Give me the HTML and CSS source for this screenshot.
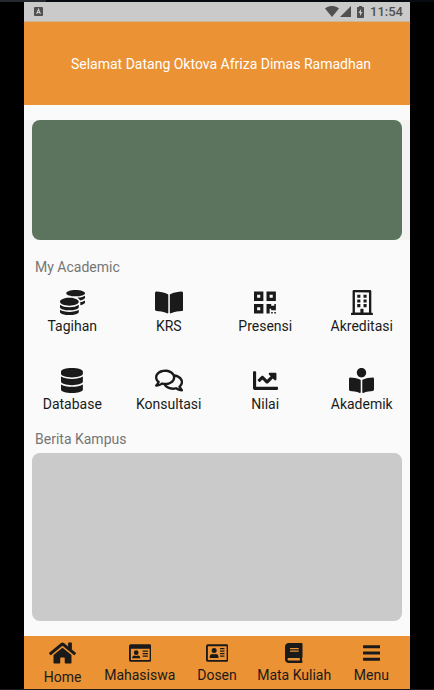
FILE: index.html
```html
<!DOCTYPE html>
<html lang="id">
<head>
<meta charset="utf-8">
<meta name="viewport" content="width=device-width, initial-scale=1">
<title>My Academic</title>
<link rel="stylesheet" href="styles.css">
</head>
<body>
<div class="window-edge"><div class="window-tab"></div></div>
<div class="app">
  <div class="status">
    <svg class="status-app" viewBox="0 0 9 9" aria-hidden="true"><rect width="9" height="9" rx="1" fill="#505050"/><path d="M2.6 7 4.5 2.2 6.4 7M3.2 5.5h2.6" fill="none" stroke="#ccc" stroke-width="1.1"/></svg>
    <div class="status-right">
      <svg class="wifi" viewBox="0 0 14 11" aria-hidden="true"><path d="M0 2.6C4-.9 10-.9 14 2.6L7 11z"/></svg>
      <svg class="signal" viewBox="0 0 11 11" aria-hidden="true"><path d="M11 0v11H0z"/></svg>
      <svg class="battery" viewBox="0 0 7 12" aria-hidden="true"><path fill-rule="evenodd" d="M2 0h3v1h1.2q.8 0 .8.8v9.4q0 .8-.8.8H.8q-.8 0-.8-.8V1.8Q0 1 .8 1H2zM4 3 1.5 7H3v3l2.5-4H4z"/></svg>
      <span class="clock">11:54</span>
    </div>
  </div>
  <header class="header">Selamat Datang Oktova Afriza Dimas Ramadhan</header>
  <main class="content">
    <section class="banner"><div class="banner-card"></div></section>
    <h2 class="title">My Academic</h2>
    <div class="menu">
      <a class="item" href="#tagihan"><svg class="icon" viewBox="0 0 512 512" aria-hidden="true"><path d="M0 405.3V448c0 35.3 86 64 192 64s192-28.7 192-64v-42.7C342.7 434.4 267.2 448 192 448S41.3 434.4 0 405.3zM320 128c106 0 192-28.7 192-64S426 0 320 0 128 28.7 128 64s86 64 192 64zM0 300.4V352c0 35.3 86 64 192 64s192-28.7 192-64v-51.6c-41.3 34-116.9 51.6-192 51.6S41.3 334.4 0 300.4zm416 11c57.3-11.1 96-31.7 96-55.4v-42.7c-23.2 16.4-57.3 27.6-96 34.5v63.6zM192 160C86 160 0 195.8 0 240s86 80 192 80 192-35.8 192-80-86-80-192-80zm219.3 56.3c60-10.8 100.7-32 100.7-56.3v-42.7c-35.5 25.1-96.5 38.6-160.7 41.8 29.5 14.3 51.2 33.5 60 57.2z"/></svg><span>Tagihan</span></a>
      <a class="item" href="#krs"><svg class="icon" viewBox="0 0 576 512" aria-hidden="true"><path d="M542.22 32.05c-54.8 3.11-163.72 14.43-230.96 55.59-4.64 2.84-7.27 7.89-7.27 13.17v363.87c0 11.55 12.63 18.85 23.28 13.49 69.18-34.82 169.23-44.32 218.7-46.92 16.89-.89 30.02-14.43 30.02-30.66V62.75c.01-17.71-15.35-31.74-33.77-30.7zM264.73 87.64C197.5 46.48 88.58 35.17 33.78 32.05 15.36 31.01 0 45.04 0 62.75V400.6c0 16.24 13.13 29.78 30.02 30.66 49.49 2.6 149.59 12.11 218.77 46.95 10.62 5.35 23.21-1.94 23.21-13.46V100.63c0-5.29-2.62-10.14-7.27-12.99z"/></svg><span>KRS</span></a>
      <a class="item" href="#presensi"><svg class="icon" viewBox="0 0 448 512" aria-hidden="true"><path d="M0 224h192V32H0v192zM64 96h64v64H64V96zm192-64v192h192V32H256zm128 128h-64V96h64v64zM0 480h192V288H0v192zm64-128h64v64H64v-64zm352-64h32v128h-96v-32h-32v96h-64V288h96v32h64v-32zm0 160h32v32h-32v-32zm-64 0h32v32h-32v-32z"/></svg><span>Presensi</span></a>
      <a class="item" href="#akreditasi"><svg class="icon" viewBox="0 0 448 512" aria-hidden="true"><path fill-rule="evenodd" d="M56 0h336q24 0 24 24v440h20q12 0 12 12v36H0v-36q0-12 12-12h20V24Q32 0 56 0zM80 48v415h112v-67q0-12 12-12h40q12 0 12 12v67h112V49z"/><path d="M128 96h64v64h-64zM256 96h64v64h-64zM128 192h64v64h-64zM256 192h64v64h-64zM128 288h64v64h-64zM256 288h64v64h-64z"/></svg><span>Akreditasi</span></a>
      <a class="item" href="#database"><svg class="icon" viewBox="0 0 448 512" aria-hidden="true"><path d="M448 73.143v45.714C448 159.143 347.667 192 224 192S0 159.143 0 118.857V73.143C0 32.857 100.333 0 224 0s224 32.857 224 73.143zM448 176v102.857C448 319.143 347.667 352 224 352S0 319.143 0 278.857V176c48.125 33.143 136.208 48.572 224 48.572S399.874 209.143 448 176zm0 160v102.857C448 479.143 347.667 512 224 512S0 479.143 0 438.857V336c48.125 33.143 136.208 48.572 224 48.572S399.874 369.143 448 336z"/></svg><span>Database</span></a>
      <a class="item" href="#konsultasi"><svg class="icon" viewBox="0 0 576 512" aria-hidden="true"><path d="M532 386.2c27.5-27.1 44-61.1 44-98.2 0-80-76.5-146.1-176.2-157.9C368.3 72.5 294.3 32 208 32 93.1 32 0 103.6 0 192c0 37 16.5 71 44 98.2-15.3 30.7-37.3 54.5-37.7 54.9-6.3 6.7-8.1 16.5-4.4 25 3.6 8.5 12 14 21.2 14 53.5 0 96.7-20.2 125.2-38.8 9.2 2.1 18.7 3.7 28.4 4.9C208.1 407.6 281.8 448 368 448c20.8 0 40.8-2.4 59.8-6.8C456.3 459.7 499.4 480 553 480c9.2 0 17.5-5.5 21.2-14 3.6-8.5 1.9-18.3-4.4-25-.4-.3-22.5-24.1-37.8-54.8zm-392.8-92.3L122.1 305c-14.1 9.1-28.5 16.3-43.1 21.4 2.7-4.7 5.4-9.7 8-14.8l15.5-31.1L77.7 256C64.2 242.6 48 220.7 48 192c0-60.7 73.3-112 160-112s160 51.3 160 112-73.3 112-160 112c-16.5 0-33-1.9-49-5.6l-19.8-4.5zM498.3 352l-24.7 24.4 15.5 31.1c2.6 5.1 5.3 10.1 8 14.8-14.6-5.1-29-12.3-43.1-21.4l-17.1-11.1-19.9 4.6c-16 3.7-32.5 5.6-49 5.6-54 0-102.2-20.1-131.3-49.7C338 339.5 416 272.9 416 192c0-3.4-.4-6.7-.7-10C479.7 196.5 528 238.8 528 288c0 28.7-16.2 50.6-29.7 64z"/></svg><span>Konsultasi</span></a>
      <a class="item" href="#nilai"><svg class="icon" viewBox="0 0 512 512" aria-hidden="true"><path d="M496 384H64V80c0-8.84-7.16-16-16-16H16C7.16 64 0 71.16 0 80v336c0 17.67 14.33 32 32 32h464c8.84 0 16-7.16 16-16v-32c0-8.84-7.16-16-16-16zM464 96H345.94c-21.38 0-32.09 25.85-16.97 40.97l32.4 32.4L288 242.75l-73.37-73.37c-12.5-12.5-32.76-12.5-45.25 0l-68.69 68.69c-6.25 6.25-6.25 16.38 0 22.63l22.62 22.62c6.25 6.25 16.38 6.25 22.63 0L192 237.25l73.37 73.37c12.5 12.5 32.76 12.5 45.25 0l96-96 32.4 32.4c15.12 15.12 40.97 4.41 40.97-16.97V112c.01-8.84-7.15-16-15.99-16z"/></svg><span>Nilai</span></a>
      <a class="item" href="#akademik"><svg class="icon" viewBox="0 0 512 512" aria-hidden="true"><path d="M352 96c0-53.02-42.98-96-96-96s-96 42.98-96 96 42.98 96 96 96 96-42.98 96-96zM233.59 241.1c-59.33-36.32-155.43-46.3-203.79-49.05C13.55 191.13 0 203.51 0 219.14v222.8c0 14.33 11.59 26.28 26.49 27.05 43.66 2.29 131.99 10.68 193.04 41.43 9.37 4.72 20.48-1.71 20.48-11.87V252.56c-.01-4.67-2.32-8.95-6.42-11.46zm248.61-49.05c-48.35 2.74-144.46 12.73-203.78 49.05-4.1 2.51-6.41 6.96-6.41 11.63v245.79c0 10.19 11.14 16.63 20.54 11.9 61.04-30.72 149.32-39.11 192.97-41.4 14.9-.78 26.49-12.73 26.49-27.06V219.14c-.01-15.63-13.56-28.01-29.8-27.09z"/></svg><span>Akademik</span></a>
    </div>
    <h2 class="title">Berita Kampus</h2>
    <section class="news"></section>
  </main>
  <nav class="nav">
    <a class="nav-item" href="#home"><svg class="nav-icon nav-icon-active" viewBox="0 0 576 512" aria-hidden="true"><path d="M280.37 148.26L96 300.11V464a16 16 0 0 0 16 16l112.06-.29a16 16 0 0 0 15.92-16V368a16 16 0 0 1 16-16h64a16 16 0 0 1 16 16v95.64a16 16 0 0 0 16 16.05L464 480a16 16 0 0 0 16-16V300L295.67 148.26a12.19 12.19 0 0 0-15.3 0zM571.6 251.47L488 182.56V44.05a12 12 0 0 0-12-12h-56a12 12 0 0 0-12 12v72.61L318.47 43a48 48 0 0 0-61 0L4.34 251.47a12 12 0 0 0-1.6 16.9l25.5 31A12 12 0 0 0 45.15 301l235.22-193.74a12.19 12.19 0 0 1 15.3 0L530.9 301a12 12 0 0 0 16.9-1.6l25.5-31a12 12 0 0 0-1.7-16.93z"/></svg><span>Home</span></a>
    <a class="nav-item" href="#mahasiswa"><svg class="nav-icon" viewBox="0 0 576 512" aria-hidden="true"><path fill-rule="evenodd" d="M48 32h480q48 0 48 48v352q0 48-48 48H48q-48 0-48-48V80q0-48 48-48zM48 144v282q0 6 6 6h468q6 0 6-6V144z"/><circle cx="184" cy="248" r="60"/><path d="M80 392c0-46 24-72 58-72 30 14 62 14 92 0 34 0 58 26 58 72zM348 192h136v32H348zM348 256h136v32H348zM348 320h136v32H348z"/></svg><span>Mahasiswa</span></a>
    <a class="nav-item" href="#dosen"><svg class="nav-icon" viewBox="0 0 576 512" aria-hidden="true"><path fill-rule="evenodd" d="M48 32h480q48 0 48 48v352q0 48-48 48H48q-48 0-48-48V80q0-48 48-48zM54 80q-6 0-6 6v340q0 6 6 6h468q6 0 6-6V86q0-6-6-6z"/><circle cx="208" cy="192" r="64"/><path d="M96 368v-20c0-36 28-68 67-68 30 12 60 12 90 0 39 0 67 32 67 68v20q0 16-22 16H118q-22 0-22-16zM360 128h112v32H360zM360 192h112v32H360zM360 256h112v32H360zM360 320h112v32H360z"/></svg><span>Dosen</span></a>
    <a class="nav-item" href="#matakuliah"><svg class="nav-icon" viewBox="0 0 448 512" aria-hidden="true"><path d="M448 360V24c0-13.3-10.7-24-24-24H96C43 0 0 43 0 96v320c0 53 43 96 96 96h328c13.3 0 24-10.7 24-24v-16c0-7.5-3.5-14.3-8.9-18.7-4.2-15.4-4.2-59.3 0-74.7 5.4-4.3 8.9-11.1 8.9-18.6zM128 134c0-3.3 2.7-6 6-6h212c3.3 0 6 2.7 6 6v20c0 3.3-2.7 6-6 6H134c-3.3 0-6-2.7-6-6v-20zm0 64c0-3.3 2.7-6 6-6h212c3.3 0 6 2.7 6 6v20c0 3.3-2.7 6-6 6H134c-3.3 0-6-2.7-6-6v-20zm253.4 250H96c-17.7 0-32-14.3-32-32 0-17.6 14.4-32 32-32h285.4c-1.9 17.1-1.9 46.9 0 64z"/></svg><span>Mata Kuliah</span></a>
    <a class="nav-item" href="#menu"><svg class="nav-icon" viewBox="0 0 448 512" aria-hidden="true"><path d="M16 60h416q16 0 16 16v40q0 16-16 16H16q-16 0-16-16V76q0-16 16-16zM16 220h416q16 0 16 16v40q0 16-16 16H16q-16 0-16-16v-40q0-16 16-16zM16 380h416q16 0 16 16v40q0 16-16 16H16q-16 0-16-16v-40q0-16 16-16z"/></svg><span>Menu</span></a>
  </nav>
</div>
</body>
</html>
```
FILE: styles.css
```css
* {
  box-sizing: border-box;
}

body {
  margin: 0;
  min-height: 100vh;
  display: flex;
  flex-direction: column;
  background: #000;
  border-bottom: 1px solid #1c1c1c;
  color: #1a1a1a;
  font: 14px/16px Roboto, "Liberation Sans", sans-serif;
}

a {
  color: inherit;
  text-decoration: none;
}

.window-edge {
  height: 2px;
  background: #070b10;
}

.window-tab {
  width: 46px;
  height: 2px;
  background: #26292e;
}

.app {
  flex: 1;
  margin: 0 24px;
  display: flex;
  flex-direction: column;
  background: #fafafa;
}

.status {
  height: 20px;
  padding: 0 7px 0 10px;
  display: flex;
  align-items: center;
  justify-content: space-between;
  background: #cacaca;
  border-bottom: 1px solid #d0b595;
  color: #505050;
}

.status-app {
  width: 9px;
  height: 9px;
}

.status-right {
  display: flex;
  align-items: center;
  fill: #505050;
}

.wifi {
  width: 14px;
  height: 11px;
  margin-right: 1px;
}

.signal {
  width: 11px;
  height: 11px;
  margin-right: 6px;
}

.battery {
  width: 7px;
  height: 12px;
  margin-right: 6px;
}

.clock {
  font-size: 13px;
  font-weight: 500;
}

.header {
  padding: 34px 8px 33px 16px;
  background: #eb9234;
  color: #fff;
  text-align: center;
}

.content {
  flex: 1;
  padding-top: 15px;
}

.banner {
  padding: 0 8px;
  background: #f3f3f3;
}

.banner-card {
  height: 120px;
  border-radius: 8px;
  background: #5c735e;
}

.title {
  margin: 0;
  padding: 19px 11px 15px;
  color: #757575;
  font-size: 14px;
  font-weight: 400;
}

.menu {
  display: grid;
  grid-template-columns: repeat(4, 1fr);
  row-gap: 34px;
}

.item {
  display: flex;
  flex-direction: column;
  align-items: center;
  gap: 3px;
}

.icon {
  height: 25px;
  fill: #1a1a1a;
}

.menu + .title {
  padding-bottom: 6px;
}

.news {
  height: 168px;
  margin: 0 8px 15px;
  border-radius: 8px;
  background: #cacaca;
}

.nav {
  height: 53px;
  display: grid;
  grid-template-columns: repeat(5, 1fr);
  background: #eb9234;
}

.nav-item {
  display: flex;
  flex-direction: column;
  align-items: center;
  justify-content: center;
  gap: 4px;
  white-space: nowrap;
}

.nav-icon {
  height: 20px;
  fill: #1a1a1a;
}

.nav-icon-active {
  height: 24px;
}
```
